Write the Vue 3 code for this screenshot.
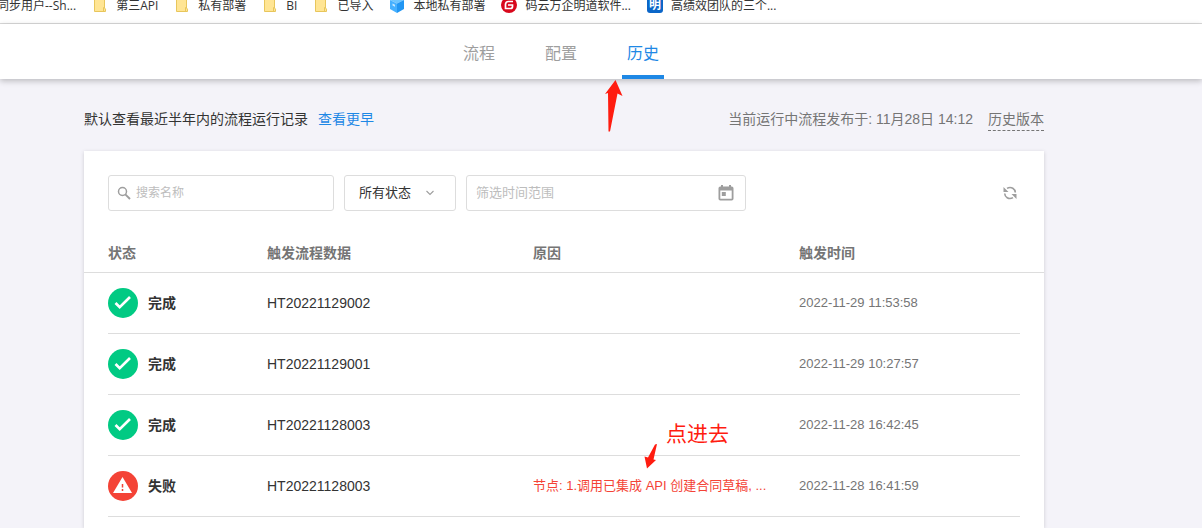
<script setup>
const bookmarks = [
  { icon: 'none', label: '同步用户--Sh...' },
  { icon: 'folder', label: '第三API' },
  { icon: 'folder', label: '私有部署' },
  { icon: 'folder', label: 'BI' },
  { icon: 'folder', label: '已导入' },
  { icon: 'cube', label: '本地私有部署' },
  { icon: 'gitee', label: '码云万企明道软件...' },
  { icon: 'ming', label: '高绩效团队的三个...' },
]
const tabs = ['流程', '配置', '历史']
const activeTab = '历史'
const columns = ['状态', '触发流程数据', '原因', '触发时间']
const rows = [
  { ok: true, status: '完成', name: 'HT20221129002', reason: '', time: '2022-11-29 11:53:58' },
  { ok: true, status: '完成', name: 'HT20221129001', reason: '', time: '2022-11-29 10:27:57' },
  { ok: true, status: '完成', name: 'HT20221128003', reason: '', time: '2022-11-28 16:42:45' },
  { ok: false, status: '失败', name: 'HT20221128003', reason: '节点: 1.调用已集成 API 创建合同草稿, ...', time: '2022-11-28 16:41:59' },
]
</script>

<template>
  <div class="page">
    <nav class="bookmarks" aria-label="书签">
      <a v-for="b in bookmarks" :key="b.label" href="#" class="bookmark" :class="{ cut: b.icon === 'none' }">
        <svg v-if="b.icon === 'folder'" class="mark" viewBox="0 0 16 16">
          <path d="M2.500 1.500h10v9.500q1.500.5 1 3.500h-11z" fill="#ffe594" stroke="#e8c65c" />
          <path d="M11.500 14v-3.500h1.500" fill="none" stroke="#e8c65c" />
        </svg>
        <svg v-else-if="b.icon === 'cube'" class="mark" viewBox="0 0 16 16">
          <path d="M8 0l7 3-7 3.500L1 3z" fill="#6cc5ff" />
          <path d="M1 3l7 3.500V16l-7-4z" fill="#45b0ff" />
          <path d="M15 3L8 6.500V16l7-4z" fill="#2196f3" />
          <path d="M3.500 6.500l2.500 1.200v2L3.500 8.500z" fill="#c5e8ff" />
        </svg>
        <svg v-else-if="b.icon === 'gitee'" class="mark" viewBox="0 0 16 16">
          <circle cx="8" cy="8" r="8" fill="#d8081c" />
          <path d="M12 4.500H7.500q-3 0-3 3v4h5q2 0 2-2V8H7" fill="none" stroke="#fff" stroke-width="1.700" />
        </svg>
        <span v-else-if="b.icon === 'ming'" class="mark ming">明</span>
        <span>{{ b.label }}</span>
      </a>
    </nav>

    <header class="header">
      <nav class="tabs">
        <a v-for="t in tabs" :key="t" href="#" class="tab" :class="{ active: t === activeTab }">{{ t }}</a>
      </nav>
      <svg class="arrow arrow-up" viewBox="0 0 20 54" aria-hidden="true">
        <path d="M10.500 1L17.500 17l-5-2.500L5 52.500H3.500L3 14l-3 1z" fill="#ff1c10" />
      </svg>
    </header>

    <main class="main">
      <div class="summary">
        <span>默认查看最近半年内的流程运行记录</span>
        <a href="#" class="earlier">查看更早</a>
        <span class="published">当前运行中流程发布于: 11月28日 14:12</span>
        <a href="#" class="versions">历史版本</a>
      </div>

      <section class="card">
        <form class="filters" @submit.prevent>
          <label class="field search">
            <svg class="search-icon" viewBox="0 0 14 14">
              <circle cx="5.500" cy="5.500" r="4" fill="none" stroke="#9e9e9e" stroke-width="1.500" />
              <path d="M8.300 8.300l4.700 4.700" stroke="#9e9e9e" stroke-width="1.900" />
            </svg>
            <input type="text" placeholder="搜索名称" aria-label="搜索名称" />
          </label>
          <label class="field state">
            <select aria-label="状态">
              <option>所有状态</option>
            </select>
            <svg class="chevron" viewBox="0 0 8 6"><path d="M.5 1L4 4.500 7.500 1" fill="none" stroke="#9e9e9e" stroke-width="1.100" /></svg>
          </label>
          <label class="field range">
            <input type="text" placeholder="筛选时间范围" aria-label="筛选时间范围" />
            <svg class="calendar" viewBox="0 0 16 18">
              <path d="M3 1h2v1.500h6V1h2v1.500h.7q1.800 0 1.800 1.800v10.400q0 1.800-1.800 1.800H2.300Q.5 16.500.5 14.700V4.300q0-1.800 1.800-1.800H3zM2.300 6.500v8.200h11.400V6.500z" fill="#9e9e9e" fill-rule="evenodd" />
              <path d="M3.800 8h4v4h-4z" fill="#9e9e9e" />
            </svg>
          </label>
          <button type="button" class="refresh" aria-label="刷新">
            <svg viewBox="0 0 14 14" fill="none" stroke="#9e9e9e" stroke-width="1.600">
              <path d="M4 2.400Q7 .6 9.800 2.300 12.200 3.800 12.300 6.500" />
              <path d="M10 11.600Q7 13.400 4.200 11.700 1.800 10.200 1.700 7.500" />
              <path d="M.5 1v5h5zM13.500 13V8h-5z" fill="#9e9e9e" stroke="none" />
            </svg>
          </button>
        </form>

        <table class="history">
          <thead>
            <tr>
              <th v-for="c in columns" :key="c" scope="col">{{ c }}</th>
            </tr>
          </thead>
          <tbody>
            <tr v-for="r in rows" :key="r.time">
              <td class="status">
                <svg viewBox="0 0 30 30" aria-hidden="true">
                  <circle cx="15" cy="15" r="15" :fill="r.ok ? '#01ca83' : '#f44336'" />
                  <path v-if="r.ok" d="M7.500 15l4.200 4.200L22 9" fill="none" stroke="#fff" stroke-width="2.700" />
                  <template v-else>
                    <path d="M14.500 6L24 22H5z" fill="#fff" />
                    <path d="M14.500 13v3.500M14.500 18v2" stroke="#f44336" stroke-width="1.500" />
                  </template>
                </svg>
                {{ r.status }}
              </td>
              <td class="name">{{ r.name }}</td>
              <td class="reason">{{ r.reason }}</td>
              <td class="time">{{ r.time }}</td>
            </tr>
          </tbody>
        </table>

        <div class="note">点进去</div>
        <svg class="arrow arrow-down" viewBox="0 0 14 26" aria-hidden="true">
          <path d="M11 1.500l2-.5-3.500 15.500 2.500.5-9 8.500L.5 13.500l3.500 1z" fill="#ff1c10" />
        </svg>
      </section>
    </main>
  </div>
</template>

<style>
body {
  margin: 0;
}
</style>

<style scoped>
* {
  box-sizing: border-box;
}
.page {
  display: flex;
  flex-direction: column;
  min-height: 100vh;
  overflow: hidden;
  background: #f4f3f9;
  color: #333;
  font-family: "Liberation Sans", "Noto Sans CJK SC", sans-serif;
  font-size: 14px;
  line-height: 20px;
}
a {
  color: inherit;
  text-decoration: none;
}
.bookmarks {
  display: flex;
  gap: 16px;
  height: 24px;
  overflow: hidden;
  background: #fff;
  border-bottom: 1px solid #dadada;
  font-family: "Open Sans", "Noto Sans CJK SC", sans-serif;
  font-size: 12px;
  line-height: 12px;
}
.bookmark {
  display: flex;
  flex: none;
  gap: 8px;
  height: 12px;
  align-items: flex-end;
  white-space: nowrap;
}
.bookmark.cut {
  margin-left: -3px;
  justify-content: flex-end;
}
.mark {
  flex: none;
  width: 16px;
  height: 16px;
  margin-bottom: -1px;
}
.ming {
  border-radius: 3px;
  background: #0b66c8;
  color: #fff;
  font-weight: 700;
  line-height: 16px;
  text-align: center;
}
.header {
  position: relative;
  z-index: 1;
  display: flex;
  justify-content: center;
  height: 55px;
  padding-right: 80px;
  background: #fff;
  box-shadow: 0 2px 6px rgba(0, 0, 0, 0.24);
}
.tabs {
  display: flex;
  gap: 40px;
}
.tab {
  padding: 0 5px;
  border-bottom: 4px solid transparent;
  color: #9e9e9e;
  font-size: 16px;
  line-height: 60px;
  height: 55px;
}
.tab.active {
  border-color: #1e88e5;
  color: #1e88e5;
}
.arrow {
  position: absolute;
}
.arrow-up {
  top: 55px;
  left: calc(50% + 4px);
  width: 20px;
  height: 54px;
}
.main {
  display: flex;
  flex: 1;
  flex-direction: column;
  width: 100%;
  max-width: 1202px;
  margin: 0 auto;
  padding: 30px 158px 0 84px;
}
.summary {
  display: flex;
  align-items: flex-start;
  height: 42px;
}
.earlier {
  margin-left: 10px;
  color: #1e88e5;
}
.published {
  margin-left: auto;
  color: #757575;
}
.versions {
  margin-left: 15px;
  padding-bottom: 1px;
  border-bottom: 1px dashed #757575;
  color: #757575;
}
.card {
  position: relative;
  flex: 1;
  background: #fff;
  box-shadow: 0 1px 4px rgba(0, 0, 0, 0.16);
}
.filters {
  display: flex;
  gap: 10px;
  padding: 24px 24px 0;
}
.field {
  display: flex;
  align-items: center;
  height: 36px;
  border: 1px solid #ddd;
  border-radius: 3px;
}
.field input,
.field select {
  flex: 1;
  min-width: 0;
  padding: 0;
  border: 0;
  outline: 0;
  background: transparent;
  color: #333;
  font: inherit;
  appearance: none;
}
.field input::placeholder {
  color: #bdbdbd;
  opacity: 1;
}
.search {
  width: 226px;
  padding: 0 8px;
  gap: 5px;
  font-size: 12px;
}
.search-icon {
  width: 14px;
  height: 14px;
}
.state {
  width: 112px;
  padding: 0 21px 0 14px;
  font-size: 13px;
}
.chevron {
  width: 8px;
  height: 6px;
}
.range {
  width: 280px;
  padding: 0 11px 0 9px;
  font-size: 13px;
}
.calendar {
  width: 16px;
  height: 18px;
}
.refresh {
  display: flex;
  align-items: center;
  margin-left: auto;
  padding: 0 3px;
  border: 0;
  background: none;
}
.refresh svg {
  width: 14px;
  height: 14px;
}
.history,
.history thead,
.history tbody {
  display: block;
}
.history tr {
  display: grid;
  grid-template-columns: 159px 1fr 1fr 221px;
  align-items: center;
  border-bottom: 1px solid #ddd;
}
.history thead tr {
  height: 62px;
  padding: 22px 24px 0;
}
.history tbody tr {
  height: 61px;
  margin: 0 24px;
}
.history th,
.history td {
  padding: 0;
  text-align: left;
}
.history th {
  color: #757575;
  font-weight: 700;
}
.history .status {
  display: flex;
  align-items: center;
  gap: 10px;
  font-weight: 700;
}
.status svg {
  width: 30px;
  height: 30px;
}
.history .reason {
  overflow: hidden;
  color: #f44336;
  font-size: 13px;
  text-overflow: ellipsis;
  white-space: nowrap;
}
.history .time {
  color: #757575;
  font-size: 13px;
}
.note {
  position: absolute;
  top: 268px;
  left: 582px;
  color: #ff1c10;
  font-size: 21px;
  line-height: 30px;
}
.arrow-down {
  top: 292px;
  left: 560px;
  width: 14px;
  height: 26px;
}
</style>
